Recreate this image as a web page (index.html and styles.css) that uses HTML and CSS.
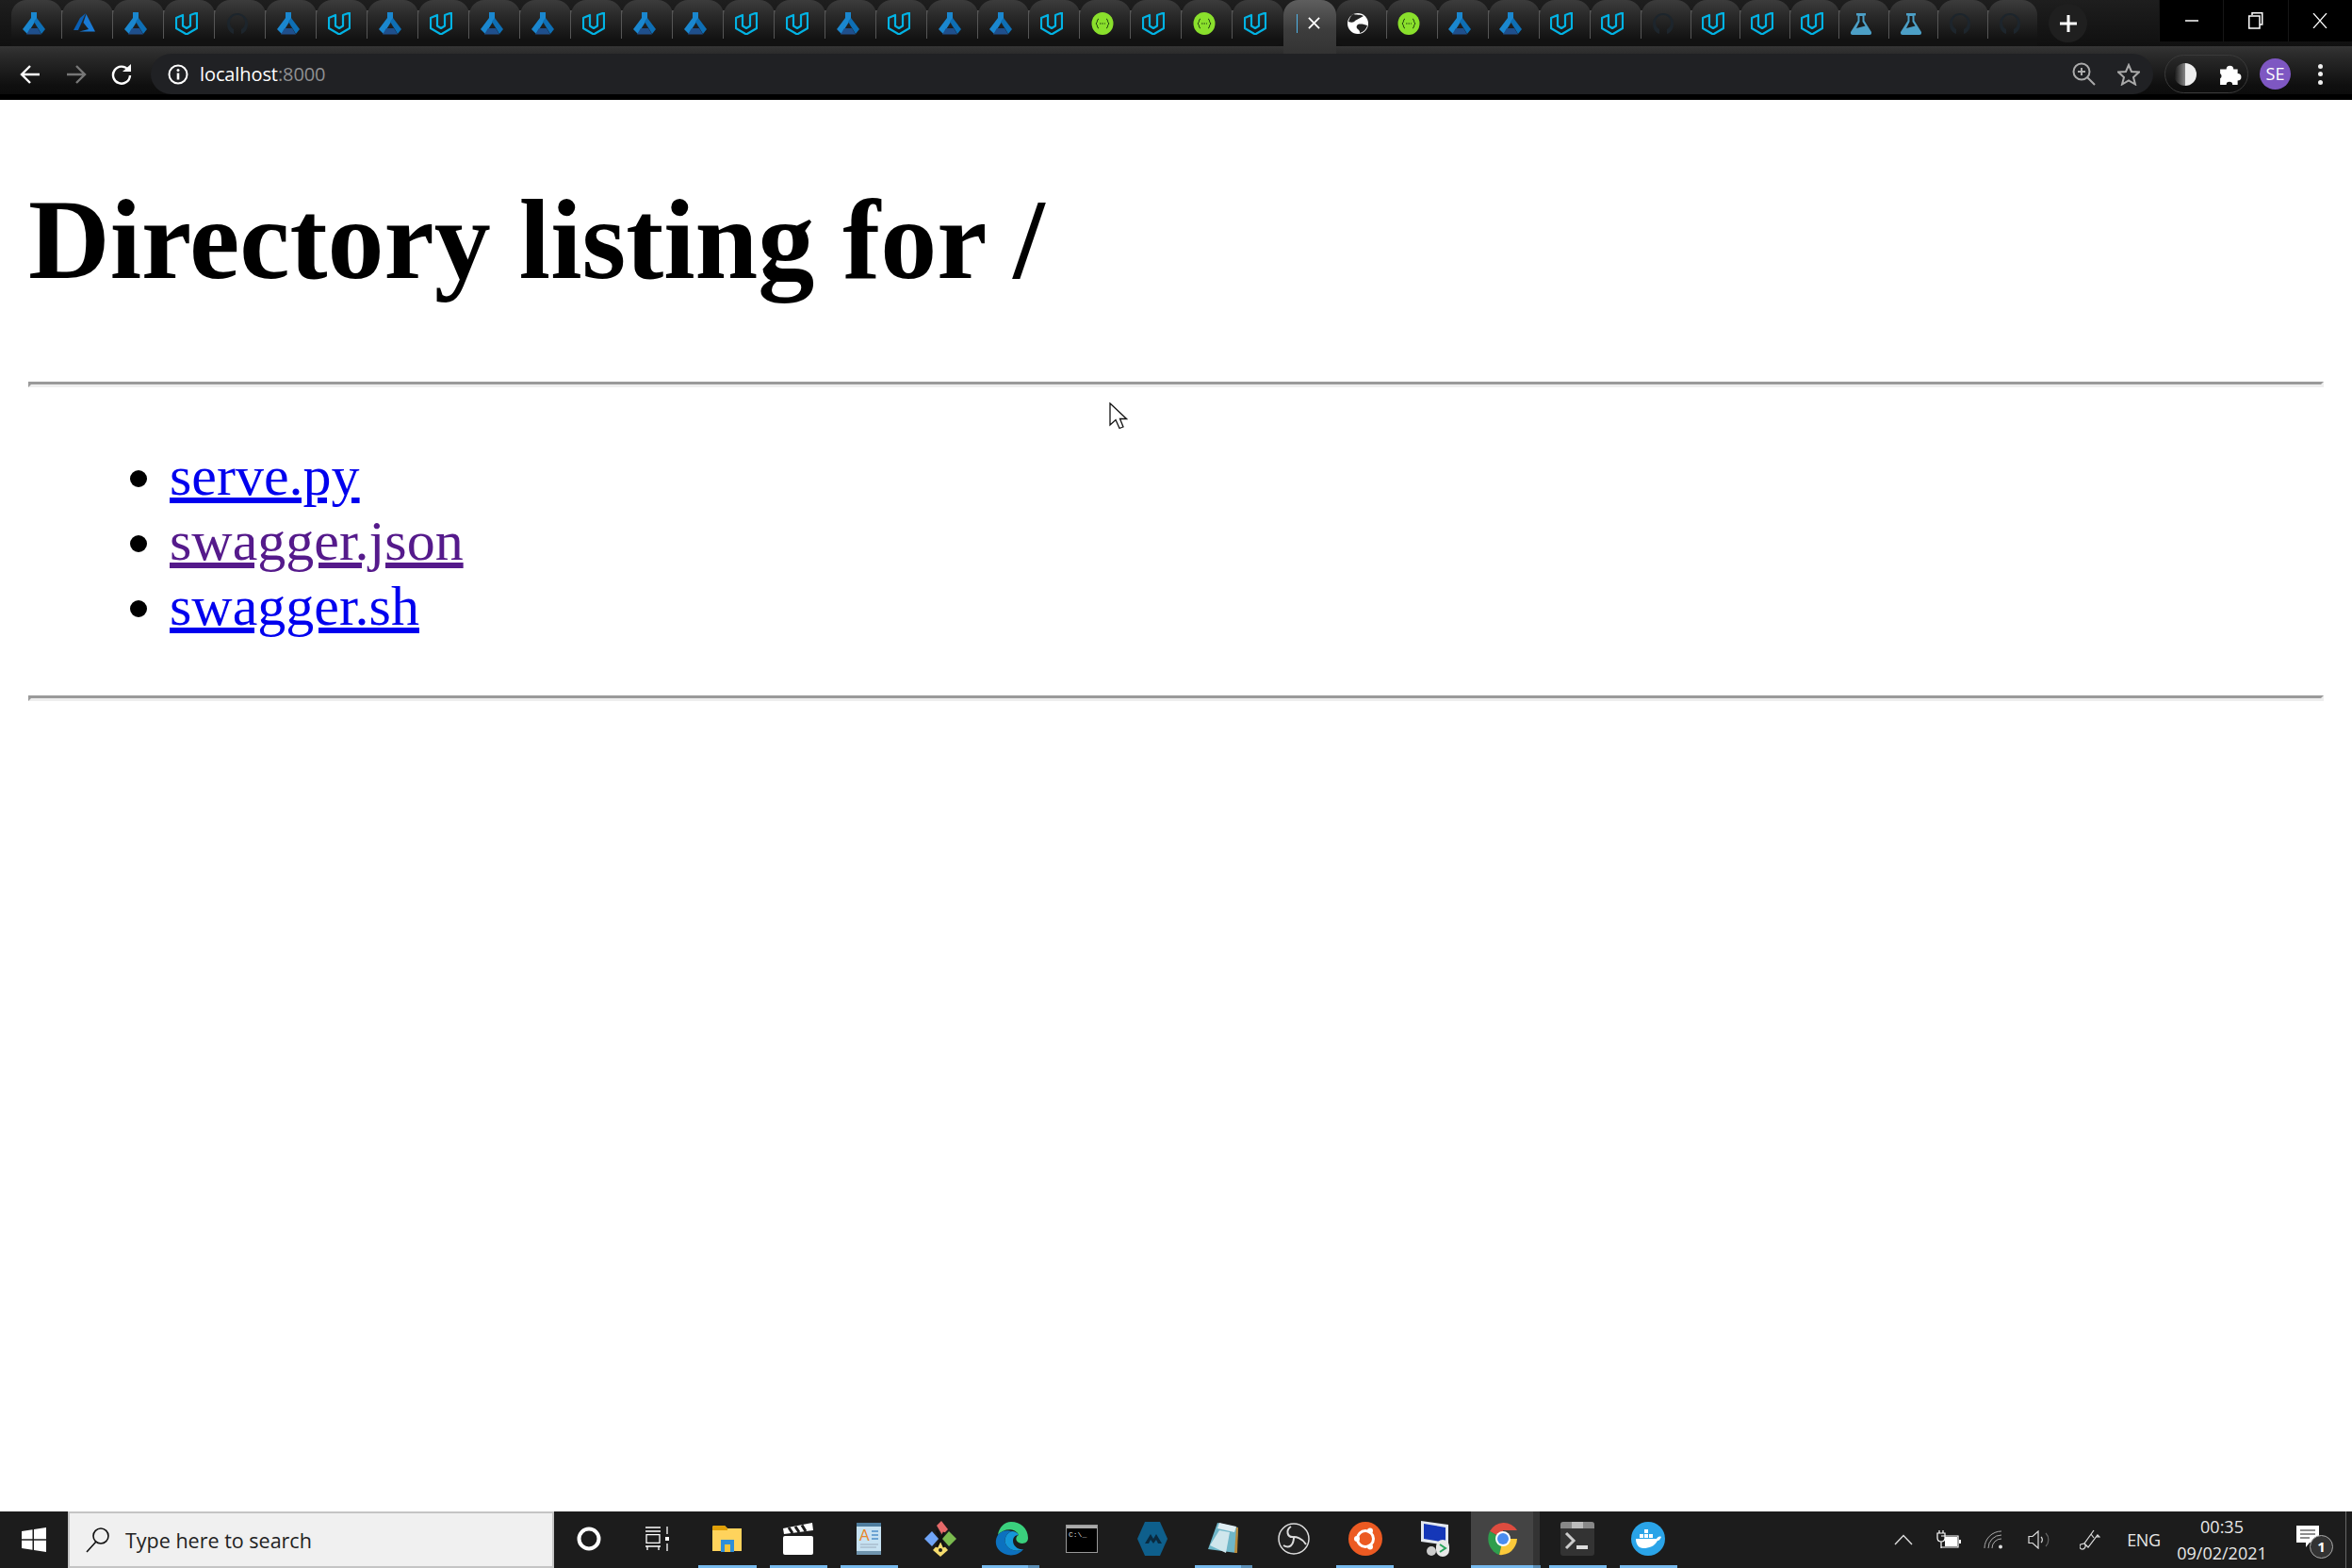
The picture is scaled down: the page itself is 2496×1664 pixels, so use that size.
FILE: index.html
```html
<!DOCTYPE html>
<html lang="en">
<head>
  <meta charset="UTF-8" />
  <title>Directory listing for /</title>
  <link rel="stylesheet" href="styles.css">
</head>
<body>
  <!-- tab favicons -->
  <svg class="sprite">
    <symbol id="flask" viewBox="0 0 24 24">
      <polygon points="9,0 15,0 15,7 5,23 0,18 9,6" fill="#1a87cf"/>
      <polygon points="15,6 24,18 20,23 12,10" fill="#0e6fb5"/>
      <polygon points="8,17 16,17 20,23.500 4,23.500" fill="#1f4f8c"/>
    </symbol>
    <symbol id="azure" viewBox="0 0 24 24">
      <polygon points="13,1 7,6 0,19 5,19" fill="#0a5fb4"/>
      <polygon points="13.500,2 10.500,11 16,18 6,20.500 23,20.500" fill="#1a7ad4"/>
    </symbol>
    <symbol id="udacity" viewBox="0 0 24 24">
      <path d="M1 6 L8 3 V14.500 L12 17 L16 14.500 V3 L23 0.500 V17 L12 23.500 L1 17 Z" fill="none" stroke="#02b3e4" stroke-width="2.200" stroke-linejoin="round"/>
    </symbol>
    <symbol id="github" viewBox="0 0 24 24">
      <path d="M8 23 C3 21 1 17 1 12 A11 11 0 0 1 23 12 C23 17 21 21 16 23 V18 C19 16 20 14 20 11 A8 8 0 0 0 4 11 C4 14 5 16 8 18 Z" fill="#1d252c"/>
    </symbol>
    <symbol id="swagger" viewBox="0 0 24 24">
      <ellipse cx="12" cy="12" rx="11.500" ry="12" fill="#8ae02c"/>
      <path d="M8 7 C6 7 7 11 5 12 C7 13 6 17 8 17 M16 7 C18 7 17 11 19 12 C17 13 18 17 16 17" fill="none" stroke="#1f3d10" stroke-width="1"/>
      <path d="M9 12 H15" stroke="#1f3d10" stroke-width="1.200" stroke-dasharray="1.500 1"/>
    </symbol>
    <symbol id="globe" viewBox="0 0 24 24">
      <circle cx="12" cy="12" r="11" fill="#fff"/>
      <path d="M7 2 C10 3 15 2 18 4 C15 6 12 7 9 9 C8 11 5 11 2 10 C3 6 5 3 7 2 Z M12 13 C15 12 19 13 22 14 C21 18 18 21 14 22 C14 19 13 19 11 17 C10 15 11 14 12 13 Z" fill="#222"/>
    </symbol>
    <symbol id="beaker" viewBox="0 0 24 24">
      <path d="M7 1 H17 V3.500 H15.500 V9 L23 21 Q23.500 24 21 24 H3 Q0.500 24 1 21 L8.500 9 V3.500 H7 Z" fill="#4c9fc6"/>
      <path d="M10.500 4 H13.500 V10 L16.500 14.500 L7 17 L10.500 10 Z" fill="#1b1b1b"/>
    </symbol>
  </svg>

  <div class="chrome">
    <div class="tabstrip">
      <div class="tabs">
        <div class="tab"><svg class="fav"><use href="#flask"/></svg></div>
        <div class="tab"><svg class="fav"><use href="#azure"/></svg></div>
        <div class="tab"><svg class="fav"><use href="#flask"/></svg></div>
        <div class="tab"><svg class="fav"><use href="#udacity"/></svg></div>
        <div class="tab"><svg class="fav"><use href="#github"/></svg></div>
        <div class="tab"><svg class="fav"><use href="#flask"/></svg></div>
        <div class="tab"><svg class="fav"><use href="#udacity"/></svg></div>
        <div class="tab"><svg class="fav"><use href="#flask"/></svg></div>
        <div class="tab"><svg class="fav"><use href="#udacity"/></svg></div>
        <div class="tab"><svg class="fav"><use href="#flask"/></svg></div>
        <div class="tab"><svg class="fav"><use href="#flask"/></svg></div>
        <div class="tab"><svg class="fav"><use href="#udacity"/></svg></div>
        <div class="tab"><svg class="fav"><use href="#flask"/></svg></div>
        <div class="tab"><svg class="fav"><use href="#flask"/></svg></div>
        <div class="tab"><svg class="fav"><use href="#udacity"/></svg></div>
        <div class="tab"><svg class="fav"><use href="#udacity"/></svg></div>
        <div class="tab"><svg class="fav"><use href="#flask"/></svg></div>
        <div class="tab"><svg class="fav"><use href="#udacity"/></svg></div>
        <div class="tab"><svg class="fav"><use href="#flask"/></svg></div>
        <div class="tab"><svg class="fav"><use href="#flask"/></svg></div>
        <div class="tab"><svg class="fav"><use href="#udacity"/></svg></div>
        <div class="tab"><svg class="fav"><use href="#swagger"/></svg></div>
        <div class="tab"><svg class="fav"><use href="#udacity"/></svg></div>
        <div class="tab"><svg class="fav"><use href="#swagger"/></svg></div>
        <div class="tab tab-before"><svg class="fav"><use href="#udacity"/></svg></div>
        <div class="tab-active">
          <span class="loading-bar"></span>
          <svg class="tab-close" viewBox="0 0 14 14"><path d="M1 1 L13 13 M13 1 L1 13" stroke="#fff" stroke-width="2"/></svg>
        </div>
        <div class="tab tab-right tab-after"><svg class="fav"><use href="#globe"/></svg></div>
        <div class="tab tab-right"><svg class="fav"><use href="#swagger"/></svg></div>
        <div class="tab tab-right"><svg class="fav"><use href="#flask"/></svg></div>
        <div class="tab tab-right"><svg class="fav"><use href="#flask"/></svg></div>
        <div class="tab tab-right"><svg class="fav"><use href="#udacity"/></svg></div>
        <div class="tab tab-right"><svg class="fav"><use href="#udacity"/></svg></div>
        <div class="tab tab-right tab-slim"><svg class="fav"><use href="#github"/></svg></div>
        <div class="tab tab-right tab-slim"><svg class="fav"><use href="#udacity"/></svg></div>
        <div class="tab tab-right tab-slim"><svg class="fav"><use href="#udacity"/></svg></div>
        <div class="tab tab-right tab-slim"><svg class="fav"><use href="#udacity"/></svg></div>
        <div class="tab tab-right tab-slim"><svg class="fav"><use href="#beaker"/></svg></div>
        <div class="tab tab-right tab-slim"><svg class="fav"><use href="#beaker"/></svg></div>
        <div class="tab tab-right tab-slim"><svg class="fav"><use href="#github"/></svg></div>
        <div class="tab tab-right tab-slim tab-last"><svg class="fav"><use href="#github"/></svg></div>
      </div>
      <div class="newtab">
        <svg width="20" height="20" viewBox="0 0 20 20"><path d="M10 1 V19 M1 10 H19" stroke="#fff" stroke-width="3"/></svg>
      </div>
      <div class="winctrls">
        <div class="winbtn"><svg width="16" height="16" viewBox="0 0 16 16"><path d="M1 8 H15" stroke="#fff" stroke-width="1.500"/></svg></div>
        <div class="winbtn"><svg width="16" height="18" viewBox="0 0 16 18"><path d="M4 3 V0.750 H14.750 V13 H12 M0.750 4 H12 V17 H0.750 Z" fill="none" stroke="#fff" stroke-width="1.500"/></svg></div>
        <div class="winbtn"><svg width="16" height="16" viewBox="0 0 16 16"><path d="M1 0 L15 16 M15 0 L1 16" stroke="#fff" stroke-width="1.200"/></svg></div>
      </div>
    </div>

    <div class="toolbar">
      <div class="navbtn"><svg width="22" height="22" viewBox="0 0 22 22"><path d="M21 11 H3 M11 2 L2 11 L11 20" fill="none" stroke="#fff" stroke-width="2.400"/></svg></div>
      <div class="navbtn"><svg width="22" height="22" viewBox="0 0 22 22"><path d="M1 11 H19 M11 2 L20 11 L11 20" fill="none" stroke="#777" stroke-width="2.400"/></svg></div>
      <div class="navbtn"><svg width="22" height="22" viewBox="0 0 22 22"><path d="M18 6 A9 9 0 1 0 20 12" fill="none" stroke="#fff" stroke-width="2.400"/><path d="M12 8 H21 V0 Z" fill="#fff"/></svg></div>
      <div class="omnibox">
        <svg class="info-icon" width="22" height="22" viewBox="0 0 22 22">
          <circle cx="11" cy="11" r="9.500" fill="none" stroke="#fff" stroke-width="2"/>
          <path d="M11 9.500 V16.500" stroke="#fff" stroke-width="2.600"/>
          <circle cx="11" cy="6.500" r="1.500" fill="#fff"/>
        </svg>
        <span class="url">localhost<span class="url-port">:8000</span></span>
        <div class="omni-icons">
          <svg width="26" height="28" viewBox="0 0 26 28">
            <circle cx="11" cy="11" r="8.500" fill="none" stroke="#aaa" stroke-width="2"/>
            <path d="M17 17 L25 25 M11 7 V15 M7 11 H15" stroke="#aaa" stroke-width="2"/>
          </svg>
          <svg width="24" height="24" viewBox="0 0 24 24"><path d="M12 2 L15 9 L23 9.500 L17 15 L19 22.500 L12 18.500 L5 22.500 L7 15 L1 9.500 L9 9 Z" fill="none" stroke="#aaa" stroke-width="2"/></svg>
        </div>
      </div>
      <div class="ext-pill">
        <svg width="24" height="26" viewBox="0 0 24 26">
          <defs><linearGradient id="contrast-l" x1="0" x2="1"><stop offset="0" stop-color="#111"/><stop offset="1" stop-color="#888"/></linearGradient></defs>
          <path d="M12 1 A12 12 0 0 0 12 25 Z" fill="url(#contrast-l)"/>
          <path d="M12 1 A12 12 0 0 1 12 25 Z" fill="#eee"/>
        </svg>
        <svg width="24" height="24" viewBox="0 0 22 22"><path d="M1 6 H7 A3.500 3.500 0 1 1 14 6 H18 V10 A3.500 3.500 0 1 1 18 17 V21 H13 A3 3 0 0 0 7 21 H1 V15 A3 3 0 0 0 1 10 Z" fill="#fff"/></svg>
      </div>
      <div class="avatar">SE</div>
      <div class="menu-dots"><span></span><span></span><span></span></div>
    </div>
  </div>

  <main class="page">
    <h1 class="title">Directory listing for /</h1>
    <hr class="rule">
    <ul class="files">
      <li><a class="file" href="#serve">serve.py</a></li>
      <li><a class="file file-visited" href="#json">swagger.json</a></li>
      <li><a class="file" href="#sh">swagger.sh</a></li>
    </ul>
    <hr class="rule">
    <svg class="cursor" width="20" height="29" viewBox="0 0 20 29">
      <path d="M1 1 V24 L7 18.500 L11 27.500 L15 26 L11.500 17.500 L18.500 17.500 Z" fill="#fff" stroke="#111" stroke-width="1.300"/>
    </svg>
  </main>

  <div class="taskbar">
    <div class="start">
      <svg width="26" height="26" viewBox="0 0 26 26"><path d="M0 4 L11.500 2.300 V12.300 H0 Z M13 2 L26 0 V12.300 H13 Z M0 13.800 H11.500 V23.800 L0 22 Z M13 13.800 H26 V26 L13 24 Z" fill="#fff"/></svg>
    </div>
    <div class="search">
      <svg width="26" height="28" viewBox="0 0 26 28"><circle cx="16" cy="10" r="8" fill="none" stroke="#111" stroke-width="1.600"/><path d="M11 16 L1 27" stroke="#111" stroke-width="1.600"/></svg>
      <span class="search-text">Type here to search</span>
    </div>
    <div class="task-tool">
      <svg width="26" height="26" viewBox="0 0 26 26"><circle cx="13" cy="13" r="10.500" fill="none" stroke="#fff" stroke-width="4"/></svg>
    </div>
    <div class="task-tool">
      <svg width="26" height="26" viewBox="0 0 26 26"><path d="M0 1 H16 M0 5 H16 M0 21 H16 M2 25 V21 M14 25 V21 M1 8.700 H15 V17.300 H1 Z M23 0 V8 M23 18 V26" fill="none" stroke="#fff" stroke-width="1.300"/><rect x="21" y="11" width="4" height="4" fill="#fff"/></svg>
    </div>

    <div class="task-app running">
      <svg width="34" height="28" viewBox="0 0 34 28"><path d="M1 2 Q1 0 3 0 H14 L17 3 H32 V27 H1 Z" fill="#ffd35c"/><path d="M1 2 Q1 0 3 0 H14 L17 3 V5 H1 Z" fill="#e0a008"/><path d="M10 28 V15 H24 V28 H20 V20 H14 V28 Z" fill="#2f8ed8"/><rect x="14" y="20" width="6" height="8" fill="#f5c43a"/></svg>
    </div>
    <div class="task-app running">
      <svg width="34" height="34" viewBox="0 0 34 34"><rect x="1" y="14" width="32" height="20" rx="2" fill="#fff"/><path d="M1 6 L32 0 L33 8 L2 12 Z" fill="#fff"/><path d="M7 5 L11 11 M14 4 L18 10 M21 2.500 L25 9" stroke="#1c1c1c" stroke-width="3"/></svg>
    </div>
    <div class="task-app running">
      <svg width="32" height="36" viewBox="0 0 32 36"><rect x="3" y="1" width="26" height="34" fill="#c7e2f2"/><rect x="3" y="1" width="26" height="4" fill="#4f7d9e"/><rect x="3" y="31" width="26" height="4" fill="#6f94ad"/><text x="6" y="20" class="doc-letter">A</text><path d="M19 10 H26 M19 14 H26 M19 18 H26" stroke="#4f8fc8" stroke-width="1.500"/><path d="M7 24 H26 M7 27 H24" stroke="#9ab" stroke-width="1"/></svg>
    </div>
    <div class="task-app">
      <svg width="36" height="38" viewBox="0 0 36 38"><polygon points="14,5 19,0 26,9 20,15" fill="#e66a6a"/><polygon points="9,11 16,19 9,27 1,19" fill="#6fa4f7"/><polygon points="27,11 35,19 27,27 20,19" fill="#7bbb4f"/><polygon points="18,22 26,31 18,38 10,31" fill="#f5dc6e"/><path d="M14 10 L22 28 M22 12 L14 28" stroke="#111" stroke-width="2.500"/><circle cx="18" cy="31" r="2" fill="#222"/></svg>
    </div>
    <div class="task-app running stacked">
      <svg width="36" height="36" viewBox="0 0 36 36"><path d="M18 0 C28 0 36 7 36 17 C36 23 30 24 26 22 C22 20 23 15 26 14 C22 6 10 7 4 14 C5 6 11 0 18 0 Z" fill="#3ad07d"/><path d="M4 14 C0 20 1 30 11 34 C18 37 27 35 31 29 C25 32 17 31 13 25 C9 18 14 11 19 10 C13 8 7 10 4 14 Z" fill="#0c71bf"/><path d="M19 10 C14 11 9 18 13 25 C17 31 25 32 31 29 C26 30 20 26 20 20 C20 17 22 14 26 14 C24 11 22 10 19 10 Z" fill="#1496d8"/></svg>
    </div>
    <div class="task-app">
      <svg width="34" height="30" viewBox="0 0 34 30"><rect x="0.500" y="0.500" width="33" height="29" fill="#000" stroke="#999"/><rect x="1" y="1" width="32" height="3" fill="#aaa"/><text x="3" y="13" class="cmd-text">C:\_</text></svg>
    </div>
    <div class="task-app">
      <svg width="32" height="36" viewBox="0 0 32 36"><polygon points="8,0 24,0 32,18 24,36 8,36 0,18" fill="#0e5f8c"/><path d="M8 23 L14 13 L17 18 L20 13 L26 23 H22 L20 19 L17 23 L14 19 L12 23 Z" fill="#0a2a3f"/></svg>
    </div>
    <div class="task-app running stacked">
      <svg width="34" height="34" viewBox="0 0 34 34"><polygon points="11,0 33,5 31,32 1,28" fill="#6fb6c8"/><polygon points="13,0 31,4 29,10 11,6" fill="#dfeef3"/><polygon points="3,24 13,8 24,10 20,32" fill="#cfe6ec"/><polygon points="31,5 33,5 32,32 29,32" fill="#b8893a"/></svg>
    </div>
    <div class="task-app">
      <svg width="34" height="34" viewBox="0 0 34 34"><circle cx="17" cy="17" r="16" fill="#222" stroke="#ddd" stroke-width="1.500"/><path d="M14 4 C8 8 10 16 17 15 M30 23 C26 16 19 15 17 15 M6 24 C12 28 17 24 17 15" fill="none" stroke="#ddd" stroke-width="2"/></svg>
    </div>
    <div class="task-app running">
      <svg width="36" height="36" viewBox="0 0 36 36"><circle cx="18" cy="18" r="18" fill="#ec5a22"/><circle cx="18" cy="18" r="8.500" fill="none" stroke="#fff" stroke-width="3"/><circle cx="9" cy="18" r="3" fill="#fff"/><circle cx="23" cy="9.500" r="3" fill="#fff"/><circle cx="23" cy="26.500" r="3" fill="#fff"/></svg>
    </div>
    <div class="task-app">
      <svg width="36" height="38" viewBox="0 0 36 38"><polygon points="2,0 31,4 31,26 2,22" fill="#e3e7ee"/><polygon points="5,3 28,7 28,23 5,19" fill="#1537b8"/><circle cx="13" cy="32" r="5" fill="#ccc"/><rect x="18" y="20" width="14" height="18" rx="7" fill="#e8e8e8"/><path d="M22 25 L28 29 L22 33" fill="none" stroke="#27a35a" stroke-width="2"/></svg>
    </div>
    <div class="task-app running stacked current">
      <svg width="34" height="36" viewBox="0 0 34 36"><path d="M17 18 L3 10 A17 18 0 0 1 32 9 H17 Z" fill="#dd4c3f"/><path d="M17 18 L3 10 A17 18 0 0 0 13 35 Z" fill="#2f9e4d"/><path d="M17 18 H32 A17 18 0 0 1 13 35 Z" fill="#fbc93a"/><circle cx="17" cy="18" r="8" fill="#fff"/><circle cx="17" cy="18" r="6" fill="#4a8cf0"/></svg>
    </div>
    <div class="task-app running">
      <svg width="36" height="36" viewBox="0 0 36 36"><rect width="36" height="36" rx="3" fill="#333"/><path d="M3 0 H33 Q36 0 36 3 V7 H0 V3 Q0 0 3 0 Z" fill="#888"/><rect x="12" width="12" height="7" fill="#bbb"/><path d="M6 12 L14 20 L6 28" fill="none" stroke="#ccc" stroke-width="3"/><rect x="17" y="25" width="12" height="4" fill="#ddd"/></svg>
    </div>
    <div class="task-app running">
      <svg width="36" height="36" viewBox="0 0 36 36"><circle cx="18" cy="18" r="18" fill="#2aa4e8"/><path d="M5 18 H27 C28 16 30 15 32 16 C31 18 30 20 28 20 C25 26 19 28 13 28 C8 28 5 24 5 18 Z" fill="#fff"/><rect x="9" y="13" width="4" height="4" fill="#fff"/><rect x="14" y="13" width="4" height="4" fill="#fff"/><rect x="19" y="13" width="4" height="4" fill="#fff"/><rect x="14" y="8" width="4" height="4" fill="#fff"/></svg>
    </div>

    <div class="tray">
      <div class="tray-item"><svg width="20" height="12" viewBox="0 0 20 12"><path d="M1 11 L10 1.500 L19 11" fill="none" stroke="#ddd" stroke-width="1.400"/></svg></div>
      <div class="tray-item"><svg width="26" height="20" viewBox="0 -2 26 20"><path d="M1 1 V6 Q1 10 5 10 Q9 10 9 6 V1 Z M3 1 V-2 M7 1 V-2 M5 10 V17" fill="none" stroke="#fff" stroke-width="1.200"/><path d="M5 4 H23 V16 H5" fill="none" stroke="#fff" stroke-width="1.200"/><rect x="9" y="5" width="13" height="10" fill="#fff"/><rect x="24" y="8" width="2" height="4" fill="#fff"/></svg></div>
      <div class="tray-item"><svg width="22" height="20" viewBox="0 0 22 20"><path d="M1 19 A18 18 0 0 1 19 1 M5 19 A14 14 0 0 1 19 5 M9 19 A10 10 0 0 1 19 9" fill="none" stroke="#aaa" stroke-width="1"/><circle cx="18" cy="17.500" r="2" fill="#ddd"/></svg></div>
      <div class="tray-item"><svg width="24" height="20" viewBox="0 0 24 20"><path d="M1 6.500 H5 L11 1 V19 L5 13.500 H1 Z" fill="none" stroke="#ddd" stroke-width="1.200"/><path d="M14 7 A4 4 0 0 1 14 13" fill="none" stroke="#ddd" stroke-width="1.200"/><path d="M19 3 A10 10 0 0 1 19 17" fill="none" stroke="#666" stroke-width="1.200"/></svg></div>
      <div class="tray-item tray-pen"><svg width="22" height="22" viewBox="0 0 22 22"><path d="M15 1 L5 15 A3.500 3.500 0 0 1 2 21 A3 3 0 0 1 1 16 L5 15 L9 19 L19 6 L21 8 L17 8 M12 5 L15 9" fill="none" stroke="#ddd" stroke-width="1.200"/></svg></div>
      <div class="tray-item tray-lang">ENG</div>
      <div class="clock"><span>00:35</span><span>09/02/2021</span></div>
      <div class="notif">
        <svg width="24" height="24" viewBox="0 0 24 24"><path d="M0 0 H24 V18 H14 L10 23 V18 H0 Z" fill="#fff"/><path d="M4 5 H20 M4 9 H20 M4 13 H14" stroke="#1c1c1c" stroke-width="1.200"/></svg>
        <span class="notif-badge">1</span>
      </div>
      <div class="show-desktop"></div>
    </div>
  </div>
</body>
</html>
```

FILE: styles.css
```css
* {
  box-sizing: border-box;
}
html {
  height: 1664px;
  overflow: hidden;
}
body {
  display: flex;
  flex-direction: column;
  height: 1664px;
  margin: 0;
  overflow: hidden;
  background: #fff;
}
.sprite {
  display: none;
}

/* browser */
.chrome {
  flex: none;
  height: 106px;
  background: #000;
}
.tabstrip {
  display: flex;
  height: 49px;
  background: linear-gradient(#1e1e1e, #101010);
}
.tabs {
  display: flex;
  padding-left: 12px;
}
.tab {
  position: relative;
  flex: none;
  width: 54px;
  height: 49px;
  padding: 13px 0 0 12px;
  background: linear-gradient(#3c3c3c, #292929 35%, #121212 85%);
  border-radius: 16px 16px 0 0;
}
.tab::after {
  content: "";
  position: absolute;
  right: -1px;
  top: 11px;
  width: 2px;
  height: 30px;
  background: #565656;
}
.tab-right {
  padding-left: 11px;
}
.tab-slim {
  width: 52.500px;
}
.tab-before {
  border-bottom-right-radius: 10px;
}
.tab-before::after,
.tab-last::after {
  display: none;
}
.tab-after {
  border-bottom-left-radius: 10px;
}
.fav {
  display: block;
  width: 24px;
  height: 24px;
}
.tab-active {
  position: relative;
  z-index: 1;
  display: flex;
  align-items: center;
  flex: none;
  width: 56px;
  height: 57px;
  padding: 0 0 8px 14px;
  background: linear-gradient(#5e5e5e, #3d3d3d 55%, #333);
  border-radius: 16px 16px 0 0;
}
.loading-bar {
  width: 1px;
  height: 20px;
  background: #4fb3e8;
}
.tab-close {
  width: 13px;
  height: 13px;
  margin-left: 11px;
}
.newtab {
  flex: none;
  display: flex;
  align-items: center;
  justify-content: center;
  width: 41px;
  height: 41px;
  margin: 4px 0 0 12px;
  background: #1f1f1f;
  border-radius: 50%;
}
.winctrls {
  display: flex;
  margin-left: auto;
  height: 44px;
  background: #000;
}
.winbtn {
  display: flex;
  align-items: center;
  justify-content: center;
  width: 68.300px;
  border-left: 1px solid #161616;
}

.toolbar {
  display: flex;
  align-items: center;
  height: 54px;
  padding: 8px 0 0 8px;
  background: linear-gradient(#353535 0, #2c2c2c 15%, #101010 80%, #0c0c0c);
  border-bottom: 3px solid #000;
}
.navbtn {
  flex: none;
  display: flex;
  align-items: center;
  justify-content: center;
  width: 48.500px;
  height: 42px;
}
.omnibox {
  flex: none;
  display: flex;
  align-items: center;
  width: 2125px;
  height: 43px;
  margin-left: 6.500px;
  padding: 0 14px 0 18px;
  background: #202124;
  border-radius: 22px;
}
.url {
  margin-left: 12px;
  font-family: "Open Sans", "Liberation Sans", sans-serif;
  font-size: 20px;
  letter-spacing: -0.1px;
  color: #fff;
}
.url-port {
  color: #8f9092;
}
.omni-icons {
  display: flex;
  align-items: center;
  gap: 23px;
  margin-left: auto;
}
.ext-pill {
  flex: none;
  display: flex;
  align-items: center;
  gap: 24px;
  width: 89px;
  height: 41px;
  margin-left: 12px;
  padding-left: 9px;
  border: 1px solid #3a3a3a;
  border-radius: 21px;
}
.avatar {
  flex: none;
  width: 33px;
  height: 33px;
  margin-left: 12px;
  background: #7e57c2;
  border-radius: 50%;
  font-family: "Open Sans", "Liberation Sans", sans-serif;
  font-size: 18px;
  line-height: 33px;
  text-align: center;
  color: #fff;
}
.menu-dots {
  display: flex;
  flex-direction: column;
  gap: 3.500px;
  margin-left: 29px;
}
.menu-dots span {
  width: 5px;
  height: 5px;
  background: #eee;
  border-radius: 50%;
}

/* page served by python -m http.server, at 375% zoom */
.page {
  position: relative;
  flex: 1;
  padding: 0.1px 30px;
  font-family: "Liberation Serif", "Times New Roman", serif;
  font-size: 60px;
  color: #000;
}
.title {
  margin: 80.400px 0;
  font-size: 120px;
  font-weight: bold;
  line-height: 138px;
}
.rule {
  margin: 30px 0;
  border-width: 3.750px;
  border-style: solid;
  border-color: #9a9a9a #eee #eee #9a9a9a;
}
.files {
  margin: 60px 0;
  padding-left: 150px;
  line-height: 69px;
}
.file {
  color: #0000ee;
  text-decoration-thickness: 6px;
}
.file-visited {
  color: #551a8b;
}
.cursor {
  position: absolute;
  left: 1177px;
  top: 321px;
}

/* windows taskbar */
.taskbar {
  flex: none;
  display: flex;
  align-items: center;
  height: 60px;
  background: #1c1c1c;
}
.start {
  flex: none;
  display: flex;
  align-items: center;
  justify-content: center;
  width: 72px;
  height: 60px;
}
.search {
  flex: none;
  display: flex;
  align-items: center;
  width: 516px;
  height: 60px;
  padding-left: 17px;
  background: #f0f0f0;
  border: 2px solid #c4c4c4;
}
.search-text {
  margin-left: 16px;
  font-family: "Open Sans", "Liberation Sans", sans-serif;
  font-size: 21.500px;
  color: #222;
}
.task-tool {
  flex: none;
  display: flex;
  align-items: center;
  justify-content: center;
  width: 73.200px;
  height: 60px;
  padding-bottom: 2px;
}
.task-app {
  position: relative;
  flex: none;
  display: flex;
  align-items: center;
  justify-content: center;
  width: 75.200px;
  height: 60px;
  padding-bottom: 2px;
}
.running::after {
  content: "";
  position: absolute;
  left: 7px;
  right: 7px;
  bottom: 0;
  height: 3px;
  background: #76b9ed;
}
.stacked::after {
  background: linear-gradient(90deg, #76b9ed 49px, #5a8db5 49px);
}
.current {
  padding-right: 8px;
  background: linear-gradient(90deg, #444 66px, #333 66px, #333 73px, transparent 73px);
}
.current::after {
  left: 0;
  right: 2px;
  background: linear-gradient(90deg, #76b9ed 66px, #5a8db5 66px);
}
.doc-letter {
  font-family: "Liberation Sans", sans-serif;
  font-size: 16px;
  fill: #e8862a;
}
.cmd-text {
  font-family: "Liberation Mono", monospace;
  font-size: 8px;
  fill: #ddd;
}
.tray {
  flex: none;
  display: flex;
  align-items: center;
  margin-left: auto;
  height: 60px;
  font-family: "Open Sans", "Liberation Sans", sans-serif;
  color: #e8e8e8;
}
.tray-item {
  display: flex;
  align-items: center;
  justify-content: center;
  width: 48px;
  height: 60px;
}
.tray-pen {
  width: 60px;
}
.tray-lang {
  width: 54px;
  font-size: 18px;
  letter-spacing: -0.3px;
}
.clock {
  display: flex;
  flex-direction: column;
  align-items: center;
  gap: 6px;
  width: 112px;
  font-size: 18px;
  line-height: 22px;
}
.notif {
  position: relative;
  display: flex;
  align-items: center;
  justify-content: center;
  width: 70px;
  height: 60px;
  padding-bottom: 6px;
}
.notif-badge {
  position: absolute;
  left: 37px;
  top: 25px;
  width: 25px;
  height: 25px;
  background: #333;
  border: 1.500px solid #aaa;
  border-radius: 50%;
  font-size: 15px;
  font-weight: bold;
  line-height: 22px;
  text-align: center;
  color: #fff;
}
.show-desktop {
  width: 12px;
  height: 60px;
  border-left: 1px solid #666;
  transform: translateX(5px);
}
```
